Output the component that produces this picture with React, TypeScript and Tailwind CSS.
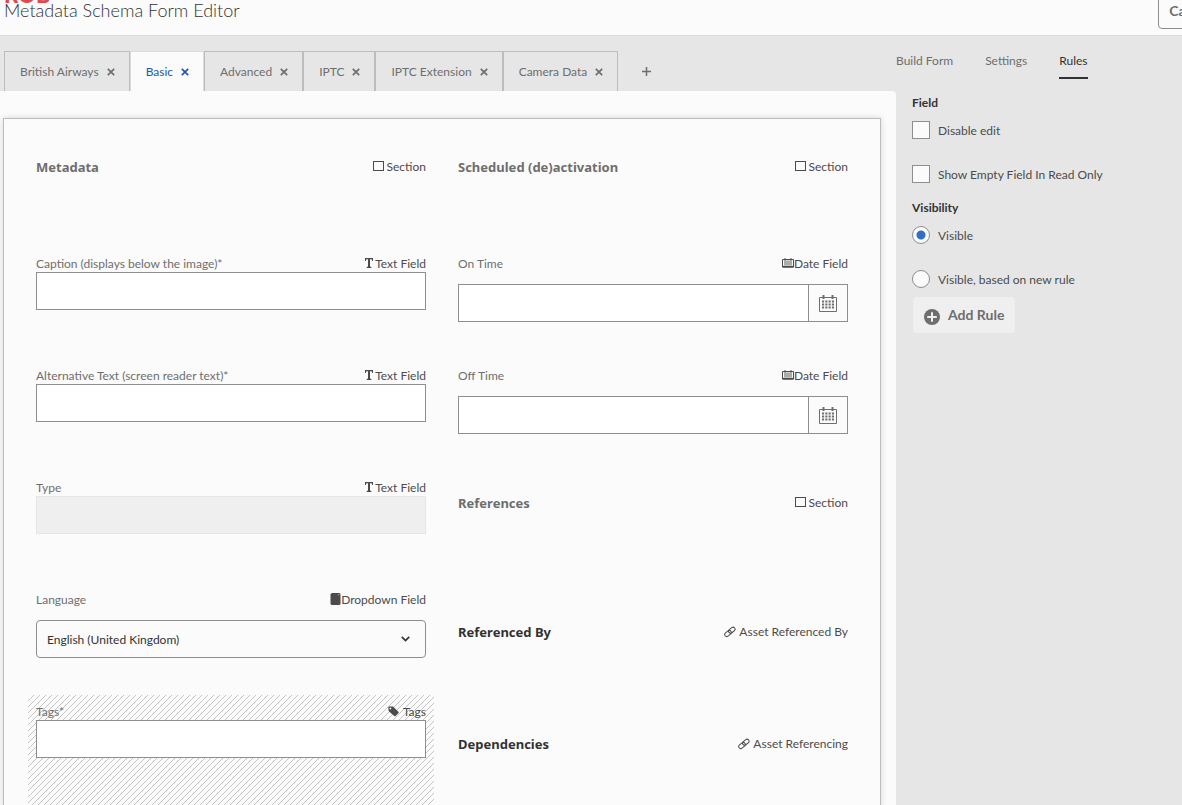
import { useState, type ReactNode } from "react";

type IconProps = { className?: string };

function CloseIcon() {
  return (
    <svg viewBox="0 0 8 8" className="mt-px size-2" fill="none" stroke="currentColor" strokeWidth="1.7">
      <path d="M0.8 0.8 7.2 7.2M7.2 0.8 0.8 7.2" />
    </svg>
  );
}

function PlusIcon() {
  return (
    <svg viewBox="0 0 9 9" className="size-[9px]" fill="none" stroke="currentColor" strokeWidth="1.5">
      <path d="M4.5 0V9M0 4.5H9" />
    </svg>
  );
}

function SquareIcon() {
  return (
    <svg viewBox="0 0 11 11" className="mr-[3px] size-[11px]" fill="none" stroke="currentColor">
      <rect x="0.5" y="0.5" width="10" height="9" />
    </svg>
  );
}

function TextIcon() {
  return (
    <svg viewBox="0 0 10 10" className="mr-px mb-px size-[10px]" fill="currentColor">
      <path d="M1 0H9V3H8.2L7.6 1.3H6V8.6L7.3 9V10H2.7V9L4 8.6V1.3H2.4L1.8 3H1Z" />
    </svg>
  );
}

function DateIcon() {
  return (
    <svg viewBox="0 0 12 10" className="mb-px h-[10px] w-3" fill="none" stroke="currentColor">
      <path d="M0.5 1.5H11.5V9H0.5Z" />
      <path d="M0.5 8.7H11.5" strokeWidth="1.6" />
      <path d="M3 0V7.5M5 2.5V7.5M7 2.5V7.5M9 0V7.5" strokeWidth="0.9" />
    </svg>
  );
}

function ListIcon() {
  return (
    <svg viewBox="0 0 11 12" className="mb-px h-3 w-[11px]" fill="currentColor">
      <path d="M0.5 1 2 0H9.5L10.5 1V11L9.5 12H1.5L0.5 11Z" />
      <path d="M8 1.5H9.6L8.8 2.5Z" fill="#fbfbfb" />
    </svg>
  );
}

function TagIcon() {
  return (
    <svg viewBox="0 0 11 11" className="mr-1 size-[11px]">
      <path
        fill="currentColor"
        fillRule="evenodd"
        d="M0.3 1.2 1 .5 5 .6 10.6 6.1V6.9L7.3 10.2H6.5L.6 4.9ZM2.4 1.6A.9.9 0 1 0 2.4 3.4 .9.9 0 1 0 2.4 1.6Z"
      />
    </svg>
  );
}

function LinkIcon() {
  return (
    <svg viewBox="0 0 12 12" className="mr-[3px] size-3" fill="none" stroke="currentColor">
      <rect x="-3.6" y="-2" width="7.2" height="4" rx="2" transform="translate(7.8 4.2) rotate(-38)" />
      <rect x="-3.6" y="-2" width="7.2" height="4" rx="2" transform="translate(4 7.5) rotate(-38)" />
    </svg>
  );
}

function CalendarIcon({ className }: IconProps) {
  return (
    <svg viewBox="0 0 18 17" className={className} fill="none" stroke="currentColor">
      <path d="M0.5 2.5H17.5V16.5H0.5Z" />
      <path d="M4.5 0V4M13.5 0V4" strokeWidth="2" />
      <path d="M3 6.5H15M3 9.5H15M3 12.5H15" strokeWidth="2" strokeDasharray="2.1 1.2" />
    </svg>
  );
}

function AddCircleIcon() {
  return (
    <svg viewBox="0 0 16 16" className="mt-[3px] size-4">
      <circle cx="8" cy="8" r="8" fill="currentColor" />
      <path d="M8 3.2V12.8M3.2 8H12.8" stroke="#efefef" strokeWidth="2" />
    </svg>
  );
}

function ChevronIcon() {
  return (
    <svg viewBox="0 0 9 6" className="h-[6px] w-[9px]" fill="none" stroke="currentColor" strokeWidth="1.7">
      <path d="M0.8 0.9 4.5 4.5 8.2 0.9" />
    </svg>
  );
}

const tabs = ["British Airways", "Basic", "Advanced", "IPTC", "IPTC Extension", "Camera Data"];

function FormTabs() {
  const [active, setActive] = useState("Basic");

  return (
    <div className="flex h-[55px] shrink-0 items-end pl-1">
      {tabs.map((tab) => (
        <button
          key={tab}
          type="button"
          onClick={() => setActive(tab)}
          className={`flex h-10 items-center gap-2 border-x border-t pr-[14px] pb-px pl-[15px] ${
            tab === active ? "border-[#dcdcdc] bg-[#fbfbfb] text-[#2056b3]" : "border-[#bdbdbd] text-[#6e6e6e]"
          }`}
        >
          {tab}
          <CloseIcon />
        </button>
      ))}
      <div className="flex h-10 items-center pl-6 text-[#6e6e6e]">
        <a href="#add-tab" aria-label="Add tab">
          <PlusIcon />
        </a>
      </div>
    </div>
  );
}

function FieldHeader({ id, label, type, icon }: { id: string; label: string; type: string; icon: ReactNode }) {
  return (
    <div className="flex justify-between pt-2">
      <label htmlFor={id} className="text-[#6e6e6e]">
        {label}
      </label>
      <span className="flex items-center text-[#4b4b4b]">
        {icon}
        {type}
      </span>
    </div>
  );
}

function TextField({ id, label, disabled }: { id: string; label: string; disabled?: boolean }) {
  return (
    <div className="h-28 px-2">
      <FieldHeader id={id} label={label} type="Text Field" icon={<TextIcon />} />
      <input
        id={id}
        type="text"
        disabled={disabled}
        className="h-[38px] w-full border border-[#8e8e8e] bg-white px-3 disabled:border-[#e6e6e6] disabled:bg-[#efefef]"
      />
    </div>
  );
}

function DateField({ id, label }: { id: string; label: string }) {
  return (
    <div className="h-28 px-2">
      <FieldHeader id={id} label={label} type="Date Field" icon={<DateIcon />} />
      <div className="mt-3 flex h-[38px] border border-[#8e8e8e]">
        <input id={id} type="text" className="min-w-0 flex-1 bg-white px-3" />
        <button
          type="button"
          aria-label="Open calendar"
          className="flex w-[39px] items-center justify-center border-l border-[#8e8e8e] text-[#6e6e6e]"
        >
          <CalendarIcon className="h-[17px] w-[18px]" />
        </button>
      </div>
    </div>
  );
}

function Section({ title }: { title: string }) {
  return (
    <div className="flex h-28 items-start justify-between px-2 pt-[23px]">
      <h2 className="font-['Noto_Sans',sans-serif] text-[13px] leading-[18px] font-bold text-[#6e6e6e]">{title}</h2>
      <span className="flex items-center text-[#4b4b4b]">
        <SquareIcon />
        Section
      </span>
    </div>
  );
}

function Reference({ title, type }: { title: string; type: string }) {
  return (
    <div className="flex h-28 items-start justify-between px-2 pt-10">
      <h3 className="font-['Noto_Sans',sans-serif] text-[13px] leading-[18px] font-bold text-[#323232]">{title}</h3>
      <span className="flex items-center text-[#4b4b4b]">
        <LinkIcon />
        {type}
      </span>
    </div>
  );
}

function LanguageField() {
  return (
    <div className="h-28 px-2">
      <FieldHeader id="language" label="Language" type="Dropdown Field" icon={<ListIcon />} />
      <div className="relative mt-3">
        <select
          id="language"
          className="h-[38px] w-full appearance-none rounded border border-[#8e8e8e] bg-[#fbfbfb] px-[10px] text-[#323232]"
        >
          <option>English (United Kingdom)</option>
        </select>
        <span className="pointer-events-none absolute inset-y-0 right-4 flex items-center text-[#323232]">
          <ChevronIcon />
        </span>
      </div>
    </div>
  );
}

function TagsField() {
  return (
    <div className="h-28 bg-[linear-gradient(135deg,transparent_45%,#c4c4c4_45%,#c4c4c4_55%,transparent_55%)] bg-[length:6px_6px] px-2">
      <FieldHeader id="tags" label="Tags*" type="Tags" icon={<TagIcon />} />
      <input id="tags" type="text" className="h-[38px] w-full border border-[#8e8e8e] bg-white px-3" />
    </div>
  );
}

function Checkbox({ label }: { label: string }) {
  return (
    <label className="flex h-[18px] items-center gap-2">
      <input type="checkbox" className="size-[18px] appearance-none border border-[#8e8e8e] bg-[#fbfbfb] checked:bg-[#326ec8]" />
      <span>{label}</span>
    </label>
  );
}

function Radio({ label, defaultChecked }: { label: string; defaultChecked?: boolean }) {
  return (
    <label className="flex h-[18px] items-center gap-2">
      <input
        type="radio"
        name="visibility"
        defaultChecked={defaultChecked}
        className="size-[18px] appearance-none rounded-full border border-[#8e8e8e] bg-[#fbfbfb] checked:bg-[radial-gradient(circle,#326ec8_4px,transparent_5px)]"
      />
      <span>{label}</span>
    </label>
  );
}

function RulesPanel() {
  return (
    <aside className="w-[286px] shrink-0 text-[#4b4b4b]">
      <nav className="flex h-[43px] gap-8 pt-4 text-[#6e6e6e]">
        <a href="#build-form">Build Form</a>
        <a href="#settings">Settings</a>
        <a href="#rules" className="border-b-2 border-[#323232] text-[#323232]">
          Rules
        </a>
      </nav>
      <div className="pt-[15px] pl-4">
        <h2 className="mb-[10px] font-bold text-[#323232]">Field</h2>
        <div className="flex flex-col gap-[26px]">
          <Checkbox label="Disable edit" />
          <Checkbox label="Show Empty Field In Read Only" />
        </div>
        <h2 className="mt-4 mb-[10px] font-bold text-[#323232]">Visibility</h2>
        <div className="flex flex-col gap-[26px]">
          <Radio label="Visible" defaultChecked />
          <Radio label="Visible, based on new rule" />
        </div>
        <button
          type="button"
          className="mt-[9px] ml-px flex h-9 items-center gap-2 rounded-sm bg-[#efefef] px-[11px] text-sm font-bold text-[#6e6e6e]"
        >
          <AddCircleIcon />
          Add Rule
        </button>
      </div>
    </aside>
  );
}

export default function App() {
  return (
    <div className="flex h-screen flex-col overflow-hidden bg-[#e6e6e6] font-[Lato,'Noto_Sans',sans-serif] text-xs leading-[17px]">
      <header className="relative flex h-9 shrink-0 items-start justify-between overflow-hidden border-b border-[#dcdcdc] bg-[#fbfbfb] pl-1">
        <span className="absolute -top-[17px] left-1 text-[22px] leading-6 font-black text-[#e0484a]">ROB</span>
        <h1 className="relative text-lg leading-5 font-light text-[#323232]">Metadata Schema Form Editor</h1>
        <button
          type="button"
          className="-mt-2 -mr-10 h-[37px] rounded border border-[#8e8e8e] px-[10px] text-sm font-bold text-[#6e6e6e]"
        >
          Cancel
        </button>
      </header>
      <div className="flex min-h-0 flex-1">
        <main className="flex min-w-0 flex-1 flex-col">
          <FormTabs />
          <div className="flex min-h-0 flex-1 flex-col overflow-hidden rounded-tr bg-[#fbfbfb] pt-[27px] pr-[15px] pl-[3px]">
            <form className="grid shrink-0 grid-cols-2 gap-x-4 border border-[#bdbdbd] px-6 pt-4 shadow-[0_0_6px_rgba(0,0,0,0.15)]">
              <Section title="Metadata" />
              <Section title="Scheduled (de)activation" />
              <TextField id="caption" label="Caption (displays below the image)*" />
              <DateField id="on-time" label="On Time" />
              <TextField id="alt-text" label="Alternative Text (screen reader text)*" />
              <DateField id="off-time" label="Off Time" />
              <TextField id="type" label="Type" disabled />
              <Section title="References" />
              <LanguageField />
              <Reference title="Referenced By" type="Asset Referenced By" />
              <TagsField />
              <Reference title="Dependencies" type="Asset Referencing" />
            </form>
          </div>
        </main>
        <RulesPanel />
      </div>
    </div>
  );
}
